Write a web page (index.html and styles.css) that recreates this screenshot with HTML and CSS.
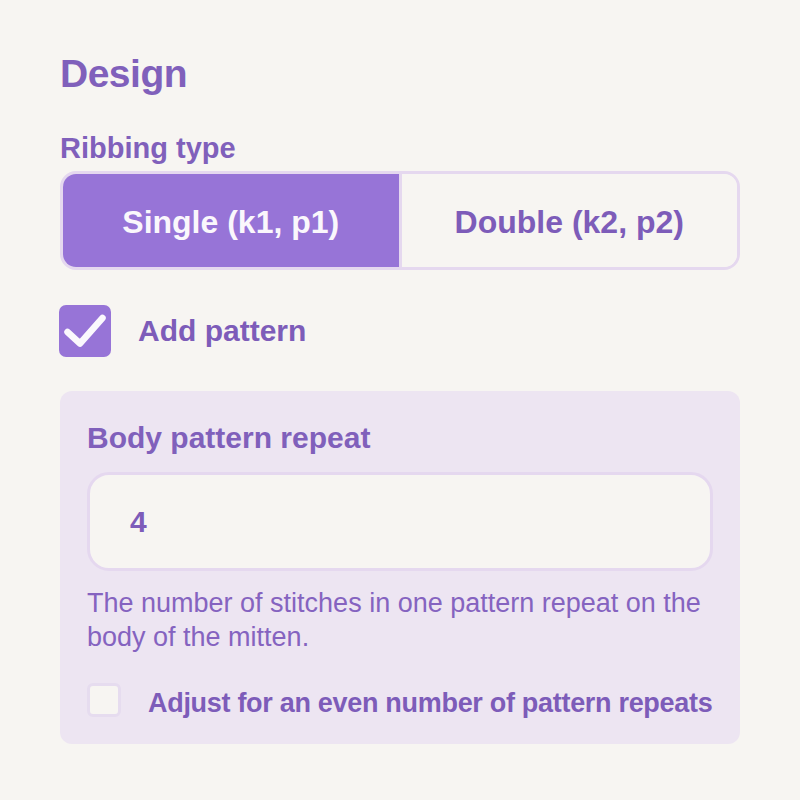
FILE: index.html
```html
<!DOCTYPE html>
<html>
<head>
<meta charset="utf-8">
<link rel="stylesheet" href="styles.css">
</head>
<body>
<div class="page">
  <h1 class="title">Design</h1>
  <div class="field">
    <div class="label">Ribbing type</div>
    <div class="segmented">
      <div class="seg seg-active">Single (k1, p1)</div>
      <div class="seg">Double (k2, p2)</div>
    </div>
  </div>
  <div class="check-row">
    <div class="checkbox checked">
      <svg width="52" height="52" viewBox="0 0 52 52"><path d="M8.5 27 L21 38.5 L43.5 13" fill="none" stroke="#fbf8fd" stroke-width="6.5" stroke-linecap="round" stroke-linejoin="round"/></svg>
    </div>
    <div class="check-label">Add pattern</div>
  </div>
  <div class="panel">
    <div class="label panel-label">Body pattern repeat</div>
    <div class="input">4</div>
    <p class="help">The number of stitches in one pattern repeat on the body of the mitten.</p>
    <div class="check-row small">
      <div class="checkbox small-box"></div>
      <div class="check-label small-label">Adjust for an even number of pattern repeats</div>
    </div>
  </div>
</div>
</body>
</html>
```
FILE: styles.css
```css
* { box-sizing: border-box; }
html, body { margin: 0; padding: 0; }
body {
  background: #f7f5f2;
  font-family: "Liberation Sans", Arial, sans-serif;
  color: #7d5cb9;
}
.page {
  padding: 52px 60px 0 60px;
  width: 800px;
}
.title {
  margin: 0;
  font-size: 39px;
  line-height: 44px;
  font-weight: 700;
  letter-spacing: -0.5px;
  color: #8060bb;
}
.field { margin-top: 35px; }
.label {
  font-size: 29px;
  font-weight: 700;
  line-height: 34px;
  color: #8060bb;
}
.segmented {
  margin-top: 6px;
  display: flex;
  height: 99px;
  border: 3px solid #e5d8ef;
  border-radius: 16px;
  overflow: hidden;
}
.seg {
  flex: 1;
  display: flex;
  align-items: center;
  justify-content: center;
  padding-top: 3px;
  font-size: 32px;
  font-weight: 700;
  color: #7d5cb9;
  background: #f7f5f2;
}
.seg-active {
  background: #9774d7;
  color: #faf7fc;
  border-right: 3px solid #e5d8ef;
}
.check-row {
  display: flex;
  align-items: center;
  margin-top: 35px;
}
.checkbox {
  width: 52px;
  height: 52px;
  border-radius: 7px;
  display: flex;
  align-items: center;
  justify-content: center;
  flex: none;
}
.checkbox.checked { background: #9774d7; margin-left: -1px; }
.check-label {
  margin-left: 27px;
  font-size: 30px;
  line-height: 34px;
  font-weight: 700;
  color: #7d5cb9;
}
.panel {
  margin-top: 34px;
  background: #ede5f2;
  border-radius: 12px;
  padding: 30px 27px 27px 27px;
}
.panel-label { font-size: 30px; }
.input {
  margin-top: 17px;
  height: 99px;
  border: 3px solid #e5d8ef;
  border-radius: 22px;
  background: #f7f5f2;
  display: flex;
  align-items: center;
  padding-left: 40px;
  font-size: 30px;
  font-weight: 700;
  color: #7d5cb9;
}
.help {
  margin: 15px 0 0 0;
  font-size: 27px;
  line-height: 34px;
  color: #8563c0;
  font-weight: 400;
}
.check-row.small { margin-top: 29px; }
.small-box {
  width: 34px;
  height: 34px;
  border: 3px solid #e6dcef;
  background: #f7f5f2;
  border-radius: 6px;
}
.small-label {
  margin-left: 27px;
  padding-top: 6px;
  font-size: 27px;
  line-height: 28px;
  letter-spacing: -0.3px;
}
```
